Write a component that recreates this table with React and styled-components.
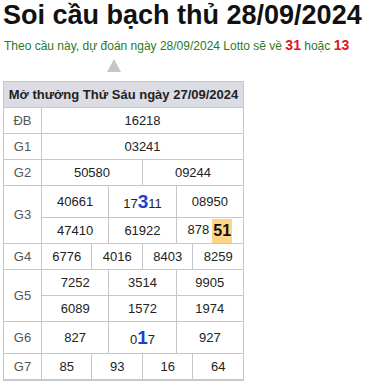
import React from "react";
import styled, { createGlobalStyle } from "styled-components";

const Global = createGlobalStyle`
  html, body { margin: 0; padding: 0; background: #fff; }
  body { font-family: Arial, "Liberation Sans", sans-serif; }
`;

const Page = styled.div`
  padding: 0 3px;
`;

const Title = styled.h1`
  margin: 0;
  font-size: 27px;
  font-weight: bold;
  color: #111;
  line-height: 30px;
  white-space: nowrap;
`;

const Subtitle = styled.p`
  margin: 7px 0 0 1px;
  font-size: 12px;
  color: #2b7a1f;
  line-height: 16px;
  white-space: nowrap;
`;

const Hot = styled.b`
  color: #e0161b;
  font-size: 14px;
`;

const Pointer = styled.div`
  width: 0;
  height: 0;
  margin: 5px 0 0 104px;
  border-left: 7px solid transparent;
  border-right: 7px solid transparent;
  border-bottom: 13px solid #c5c5c9;
`;

const Table = styled.table`
  margin-top: 9px;
  width: 241px;
  table-layout: fixed;
  border-collapse: collapse;
  border-bottom: 2px solid #c8c8cf;
  font-size: 13px;
  color: #222;
`;

const HeadCell = styled.th`
  background: #dcdce4;
  border: 1px solid #c6c6ce;
  height: 25px;
  padding: 0;
  font-size: 13px;
  font-weight: bold;
  color: #222;
  text-align: center;
  white-space: nowrap;
`;

const Label = styled.td`
  border: 1px solid #c6c6ce;
  padding: 0;
  text-align: center;
  color: #555;
  font-size: 13px;
`;

const Cell = styled.td`
  border: 1px solid #c6c6ce;
  padding: 0;
  height: ${(p) => (p.$tall ? 31 : 25)}px;
  text-align: center;
  white-space: nowrap;
`;

const Big = styled.b`
  color: #1c3fcb;
  font-size: 19px;
`;

const Mark = styled.span`
  display: inline-block;
  background: #fcd586;
  color: #111;
  font-weight: bold;
  font-size: 16px;
  line-height: 16px;
  padding: 4px 1px;
  margin-left: 3px;
  vertical-align: middle;
`;

const rows = [
  { label: "ĐB", lines: [[["16218"]]] },
  { label: "G1", lines: [[["03241"]]] },
  { label: "G2", lines: [[["50580"], ["09244"]]] },
  {
    label: "G3",
    lines: [
      [["40661"], [<>17<Big>3</Big>11</>, true], ["08950"]],
      [["47410"], ["61922"], [<>878<Mark>51</Mark></>]],
    ],
  },
  { label: "G4", lines: [[["6776"], ["4016"], ["8403"], ["8259"]]] },
  {
    label: "G5",
    lines: [
      [["7252"], ["3514"], ["9905"]],
      [["6089"], ["1572"], ["1974"]],
    ],
  },
  { label: "G6", lines: [[["827"], [<>0<Big>1</Big>7</>, true], ["927"]]] },
  { label: "G7", lines: [[["85"], ["93"], ["16"], ["64"]]] },
];

export default function App() {
  return (
    <Page>
      <Global />
      <Title>Soi cầu bạch thủ 28/09/2024</Title>
      <Subtitle>
        Theo cầu này, dự đoán ngày 28/09/2024 Lotto sẽ về <Hot>31</Hot> hoặc{" "}
        <Hot>13</Hot>
      </Subtitle>
      <Pointer />
      <Table>
        <colgroup>
          <col style={{ width: 38 }} />
          {Array.from({ length: 12 }).map((_, i) => (
            <col key={i} />
          ))}
        </colgroup>
        <thead>
          <tr>
            <HeadCell colSpan={13}>Mở thưởng Thứ Sáu ngày 27/09/2024</HeadCell>
          </tr>
        </thead>
        <tbody>
          {rows.map((r) => {
            const tallRow = (line) => line.some((c) => c[1]);
            return r.lines.map((line, li) => (
              <tr key={r.label + li}>
                {li === 0 && <Label rowSpan={r.lines.length}>{r.label}</Label>}
                {line.map((c, ci) => (
                  <Cell
                    key={ci}
                    colSpan={12 / line.length}
                    $tall={tallRow(line)}
                  >
                    {c[0]}
                  </Cell>
                ))}
              </tr>
            ));
          })}
        </tbody>
      </Table>
    </Page>
  );
}
